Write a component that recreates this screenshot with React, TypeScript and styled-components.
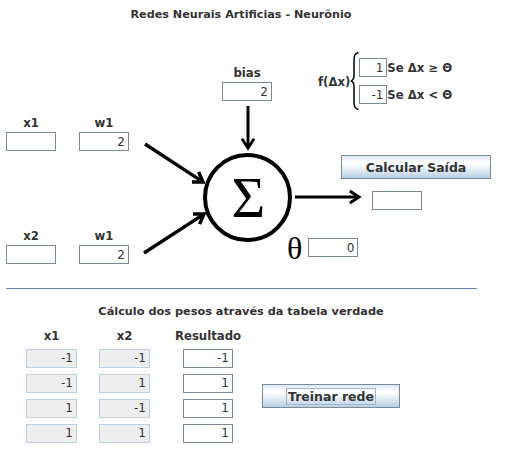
import React from 'react';
import styled, { createGlobalStyle } from 'styled-components';

const Global = createGlobalStyle`
  html, body { margin: 0; padding: 0; background: #ffffff; }
  body { font-family: "DejaVu Sans", "Noto Sans", sans-serif; color: #333333; }
`;

const Page = styled.div`
  width: 514px;
  height: 450px;
  overflow: hidden;
  position: relative;
`;

const Title = styled.h1`
  margin: 0;
  padding-top: 8px;
  height: 30px;
  box-sizing: border-box;
  width: 482px;
  text-align: center;
  font-size: 11.2px;
  line-height: 13px;
  font-weight: bold;
  color: #333333;
`;

const Diagram = styled.div`
  position: relative;
  height: 240px;
`;

const Drawing = styled.svg`
  position: absolute;
  left: 0;
  top: 0;
  pointer-events: none;
`;

const TopRow = styled.div`
  display: flex;
  align-items: flex-start;
  height: 80px;
`;

const MidRow = styled.div`
  display: flex;
  align-items: flex-start;
  height: 160px;
`;

const FieldGroup = styled.div<{ $ml?: number; $mt?: number }>`
  display: flex;
  flex-direction: column;
  align-items: center;
  gap: 2px;
  margin-left: ${(p) => p.$ml ?? 0}px;
  margin-top: ${(p) => p.$mt ?? 0}px;
`;

const Label = styled.span<{ $w?: number }>`
  display: flex;
  justify-content: center;
  font-size: 11.7px;
  line-height: 14px;
  font-weight: bold;
  color: #333333;
  width: ${(p) => (p.$w ? `${p.$w}px` : 'auto')};
  white-space: nowrap;
`;

const Field = styled.input<{ $w: number; $off?: boolean }>`
  box-sizing: border-box;
  width: ${(p) => p.$w}px;
  height: 19px;
  margin: 0;
  padding: 0 3px 0 2px;
  border: 1px solid ${(p) => (p.$off ? '#b8cfe5' : '#7a8a99')};
  border-radius: 0;
  background: ${(p) => (p.$off ? '#eeeeee' : '#ffffff')};
  font-family: "DejaVu Sans", sans-serif;
  font-size: 12px;
  color: #333333;
  text-align: right;
  outline: none;
`;

const LeftCol = styled.div`
  display: flex;
  flex-direction: column;
  margin-left: 6px;
`;

const Pair = styled.div<{ $mt: number }>`
  display: flex;
  gap: 23px;
  margin-top: ${(p) => p.$mt}px;
`;

const RightCol = styled.div`
  display: flex;
  flex-direction: column;
  align-items: flex-start;
  margin-left: 158px;
`;

const Button = styled.button<{ $w: number; $ml?: number; $mt?: number }>`
  box-sizing: border-box;
  width: ${(p) => p.$w}px;
  height: 24px;
  margin: ${(p) => p.$mt ?? 0}px 0 0 ${(p) => p.$ml ?? 0}px;
  padding: 0;
  border: 1px solid #7a8a99;
  border-radius: 0;
  background: linear-gradient(to bottom, #dde8f3 0%, #ffffff 30%, #ffffff 35%, #b8cfe5 100%);
  font-family: "DejaVu Sans", sans-serif;
  font-size: 12.5px;
  font-weight: bold;
  color: #333333;
  display: flex;
  align-items: center;
  justify-content: center;
`;

const FocusText = styled.span`
  border: 1px solid #a3b8cc;
  padding: 0 1px;
  line-height: 15px;
`;

const OutBox = styled.div`
  margin: 10px 0 0 85px;
`;

const ThetaRow = styled.div`
  display: flex;
  align-items: center;
  gap: 6px;
  margin-top: 23px;
`;

const Theta = styled.span`
  font-family: "Liberation Serif", "DejaVu Serif", serif;
  font-size: 32px;
  line-height: 30px;
  color: #000000;
`;

const FGroup = styled.div`
  display: flex;
  align-items: center;
  margin-left: 46px;
  margin-top: 22px;
`;

const FLabel = styled.span`
  font-size: 11.7px;
  font-weight: bold;
  line-height: 14px;
  color: #333333;
  margin-top: 2px;
`;

const Brace = styled.svg`
  display: block;
`;

const Cases = styled.div`
  display: flex;
  flex-direction: column;
  gap: 8px;
`;

const CaseRow = styled.div`
  display: flex;
  align-items: center;
`;

const CaseText = styled.span`
  font-size: 11.7px;
  font-weight: bold;
  line-height: 14px;
  color: #333333;
  white-space: nowrap;
`;

const Separator = styled.hr`
  margin: 18px 0 0 6px;
  width: 471px;
  height: 0;
  border: 0;
  border-top: 1px solid #6382bf;
`;

const SectionTitle = styled.h2`
  margin: 16px 0 0 0;
  width: 482px;
  text-align: center;
  font-size: 11.3px;
  line-height: 13px;
  font-weight: bold;
  color: #333333;
`;

const Table = styled.div`
  display: grid;
  grid-template-columns: 73px 84px 79px 138px;
  grid-template-rows: 18px 25px 25px 25px 19px;
  margin: 11px 0 0 26px;
`;

const Cell = styled.div<{ $col: number; $row: number }>`
  grid-column: ${(p) => p.$col};
  grid-row: ${(p) => p.$row};
  justify-self: start;
  align-self: start;
`;

const TrainCell = styled.div`
  grid-column: 4;
  grid-row: 2 / 6;
  align-self: start;
  margin-top: 37px;
`;

type Pt = [number, number];

function head(from: Pt, to: Pt, len = 11, spread = 0.58): string {
  const a = Math.atan2(to[1] - from[1], to[0] - from[0]);
  const p1: Pt = [to[0] - len * Math.cos(a - spread), to[1] - len * Math.sin(a - spread)];
  const p2: Pt = [to[0] - len * Math.cos(a + spread), to[1] - len * Math.sin(a + spread)];
  return `${p1[0]},${p1[1]} ${to[0]},${to[1]} ${p2[0]},${p2[1]}`;
}

function shorten(from: Pt, to: Pt, d: number): Pt {
  const a = Math.atan2(to[1] - from[1], to[0] - from[0]);
  return [to[0] - d * Math.cos(a), to[1] - d * Math.sin(a)];
}

const Arrow: React.FC<{ from: Pt; to: Pt; w?: number }> = ({ from, to, w = 3 }) => {
  const end = shorten(from, to, 2);
  return (
    <g stroke="#000" strokeWidth={w} fill="none">
      <line x1={from[0]} y1={from[1]} x2={end[0]} y2={end[1]} />
      <polyline points={head(from, to)} strokeLinejoin="miter" strokeMiterlimit={6} />
    </g>
  );
};

const table: [string, string, string][] = [
  ['-1', '-1', '-1'],
  ['-1', '1', '1'],
  ['1', '-1', '1'],
  ['1', '1', '1'],
];

export default function App() {
  return (
    <Page>
      <Global />
      <Title>Redes Neurais Artificias - Neurônio</Title>
      <Diagram>
        <Drawing width={514} height={240} viewBox="0 30 514 240">
          <Arrow from={[248, 106]} to={[248, 148]} />
          <Arrow from={[145, 144]} to={[203, 182]} w={3.4} />
          <Arrow from={[144, 253]} to={[204, 214]} w={3.4} />
          <Arrow from={[295, 197]} to={[359, 197]} />
          <circle cx={247.5} cy={197.5} r={42.5} stroke="#000" strokeWidth={4} fill="#fff" />
          <text
            x={248.5}
            y={217}
            textAnchor="middle"
            fontFamily="'Liberation Serif', 'DejaVu Serif', serif"
            fontSize={58}
            fill="#000"
          >
            Σ
          </text>
        </Drawing>
        <TopRow>
          <FieldGroup $ml={222} $mt={36}>
            <Label>bias</Label>
            <Field $w={50} defaultValue="2" />
          </FieldGroup>
          <FGroup>
            <FLabel>f(Δx)</FLabel>
            <Brace width={9} height={58} viewBox="0 0 9 58">
              <path
                d="M8.5 0.5 C4.5 1.5 4 4 4 9 L4 23 C4 27 3 28.5 0.8 29 C3 29.5 4 31 4 35 L4 49 C4 54 4.5 56.5 8.5 57.5"
                stroke="#000"
                strokeWidth={1.5}
                fill="none"
              />
            </Brace>
            <Cases>
              <CaseRow>
                <Field $w={28} defaultValue="1" />
                <CaseText>Se Δx ≥ Θ</CaseText>
              </CaseRow>
              <CaseRow>
                <Field $w={28} defaultValue="-1" />
                <CaseText>Se Δx &lt; Θ</CaseText>
              </CaseRow>
            </Cases>
          </FGroup>
        </TopRow>
        <MidRow>
          <LeftCol>
            <Pair $mt={6}>
              <FieldGroup>
                <Label>x1</Label>
                <Field $w={50} defaultValue="" />
              </FieldGroup>
              <FieldGroup>
                <Label>w1</Label>
                <Field $w={50} defaultValue="2" />
              </FieldGroup>
            </Pair>
            <Pair $mt={78}>
              <FieldGroup>
                <Label>x2</Label>
                <Field $w={50} defaultValue="" />
              </FieldGroup>
              <FieldGroup>
                <Label>w1</Label>
                <Field $w={50} defaultValue="2" />
              </FieldGroup>
            </Pair>
          </LeftCol>
          <RightCol>
            <Button $w={150} $ml={54} $mt={45}>Calcular Saída</Button>
            <OutBox>
              <Field $w={50} defaultValue="" />
            </OutBox>
            <ThetaRow>
              <Theta>θ</Theta>
              <Field $w={50} defaultValue="0" />
            </ThetaRow>
          </RightCol>
        </MidRow>
      </Diagram>
      <Separator />
      <SectionTitle>Cálculo dos pesos através da tabela verdade</SectionTitle>
      <Table>
        <Cell $col={1} $row={1}><Label $w={51}>x1</Label></Cell>
        <Cell $col={2} $row={1}><Label $w={51}>x2</Label></Cell>
        <Cell $col={3} $row={1}><Label $w={50}>Resultado</Label></Cell>
        {table.map((r, i) => (
          <React.Fragment key={i}>
            <Cell $col={1} $row={i + 2}><Field $w={51} $off readOnly value={r[0]} /></Cell>
            <Cell $col={2} $row={i + 2}><Field $w={51} $off readOnly value={r[1]} /></Cell>
            <Cell $col={3} $row={i + 2}><Field $w={50} defaultValue={r[2]} /></Cell>
          </React.Fragment>
        ))}
        <TrainCell>
          <Button $w={138}><FocusText>Treinar rede</FocusText></Button>
        </TrainCell>
      </Table>
    </Page>
  );
}
